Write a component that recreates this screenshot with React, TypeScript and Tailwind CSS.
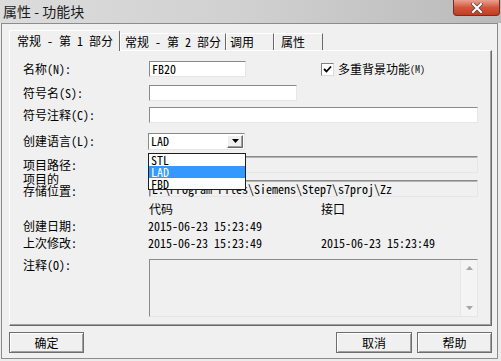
import React from "react";

const sunken =
  "border border-t-[#8a8a8a] border-l-[#8a8a8a] border-r-[#e6e6e6] border-b-[#e6e6e6]";
const raised =
  "border border-t-[#ffffff] border-l-[#ffffff] border-r-[#696969] border-b-[#696969] shadow-[inset_-1px_-1px_0_#a0a0a0]";

function Label({ children }: { children: React.ReactNode }) {
  return <span className="w-[126px] shrink-0 whitespace-pre">{children}</span>;
}

function DialogButton({ text, width }: { text: string; width: string }) {
  return (
    <div
      className={`${width} h-[21px] flex items-center justify-center bg-[#f0f0f0] border border-[#6e6e6e] shadow-[inset_1px_1px_0_#ffffff,inset_-1px_-1px_0_#a0a0a0]`}
    >
      {text}
    </div>
  );
}

export default function App() {
  return (
    <div className="w-[501px] h-[361px] bg-[#ececec] font-['Noto_Sans_Mono_CJK_SC','Noto_Sans_CJK_SC','Liberation_Mono',monospace] text-[12px] leading-[16px] text-black overflow-hidden">
      {/* Title bar */}
      <div className="h-[23px] flex items-start bg-gradient-to-r from-[#dcdcdc] via-[#d0d0d0] to-[#bababa]">
        <span className="ml-[3px] mt-[2px] font-['Noto_Sans_CJK_SC',sans-serif] text-[14px] leading-[19px] text-[#1a1a1a]">
          属性 - 功能块
        </span>
        <div className="ml-auto mr-[1px] w-[47px] h-[16px] rounded-b-[4px] border border-t-0 border-[#7a2c1f] bg-gradient-to-b from-[#e9a090] via-[#d2553b] to-[#c23d22] flex items-center justify-center">
          <svg width="12" height="10" viewBox="0 0 12 10">
            <path
              d="M2 1 L10 9 M10 1 L2 9"
              stroke="#4a4a4a"
              strokeWidth="3.4"
              strokeLinecap="square"
            />
            <path
              d="M2 1 L10 9 M10 1 L2 9"
              stroke="#ffffff"
              strokeWidth="2"
              strokeLinecap="square"
            />
          </svg>
        </div>
      </div>

      {/* Window body */}
      <div className="ml-[1px] w-[497px] h-[336px] border border-[#8c8c8c] bg-[#f0f0f0] pl-[7px] pr-[4px]">
        {/* Tabs */}
        <div className="h-[26px] flex items-end relative z-10">
          <div className="w-[111px] h-[21px] -mb-[1px] bg-[#f0f0f0] border border-b-0 border-t-white border-l-white border-r-[#696969] rounded-t-[2px] pl-[7px] leading-[19px] whitespace-pre">
            常规 - 第 1 部分
          </div>
          <div className="w-[106px] h-[17px] bg-[#f0f0f0] border border-b-0 border-t-white border-l-white border-r-[#696969] pl-[4px] leading-[15px] whitespace-pre">
            常规 - 第 2 部分
          </div>
          <div className="w-[48px] h-[17px] bg-[#f0f0f0] border border-b-0 border-t-white border-l-white border-r-[#696969] pl-[3px] leading-[15px]">
            调用
          </div>
          <div className="w-[49px] h-[17px] bg-[#f0f0f0] border border-b-0 border-t-white border-l-white border-r-[#696969] pl-[6px] leading-[15px]">
            属性
          </div>
        </div>

        {/* Tab panel */}
        <div className="w-[483px] h-[276px] border border-t-white border-l-white border-r-[#696969] border-b-[#696969] shadow-[inset_-1px_-1px_0_#a0a0a0] pt-[10px] pl-[13px]">
          {/* 名称 */}
          <div className="flex items-center h-[16px]">
            <Label>名称(N):</Label>
            <div className={`w-[97px] h-[16px] bg-white ${sunken} pl-[2px] leading-[14px]`}>
              FB20
            </div>
            <div className="ml-[75px] flex items-center">
              <div className="w-[13px] h-[13px] bg-white border border-t-[#808080] border-l-[#808080] border-r-[#dcdcdc] border-b-[#dcdcdc] flex items-center justify-center">
                <svg width="9" height="9" viewBox="0 0 9 9">
                  <path d="M1 4 L3.5 6.5 L8 1.5" fill="none" stroke="#000" strokeWidth="1.8" />
                </svg>
              </div>
              <span className="ml-[4px]">多重背景功能</span>
              <span className="text-[10px]">(M)</span>
            </div>
          </div>

          {/* 符号名 */}
          <div className="flex items-center h-[16px] mt-[8px]">
            <Label>符号名(S):</Label>
            <div className={`w-[148px] h-[16px] bg-white ${sunken}`} />
          </div>

          {/* 符号注释 */}
          <div className="flex items-center h-[16px] mt-[6px]">
            <Label>符号注释(C):</Label>
            <div className={`w-[329px] h-[16px] bg-white ${sunken}`} />
          </div>

          {/* 创建语言 */}
          <div className="flex items-center h-[16px] mt-[10px] relative z-20">
            <Label>创建语言(L):</Label>
            <div className={`w-[97px] h-[17px] -ml-[1px] bg-white ${sunken} relative flex items-center`}>
              <span className="pl-[2px] leading-[14px]">LAD</span>
              <div className={`absolute right-[1px] top-[1px] w-[16px] h-[13px] bg-[#f0f0f0] ${raised} flex items-center justify-center`}>
                <svg width="7" height="4" viewBox="0 0 7 4">
                  <path d="M0 0 H7 L3.5 4 Z" fill="#000" />
                </svg>
              </div>
              {/* open list */}
              <div className="absolute left-[-1px] top-[19px] w-[98px] bg-white border border-[#1e1e1e] leading-[12px]">
                <div className="h-[12px] pl-[2px]">STL</div>
                <div className="h-[12px] pl-[2px] bg-[#3399ff] text-white">LAD</div>
                <div className="h-[11px] pl-[2px]">FBD</div>
              </div>
            </div>
          </div>

          {/* 项目路径 */}
          <div className="flex items-center h-[17px] mt-[7px]">
            <Label>项目路径:</Label>
            <div className={`w-[329px] h-[17px] bg-[#f0f0f0] ${sunken} shadow-[inset_1px_1px_0_#b4b4b4]`} />
          </div>

          {/* 存储位置 */}
          <div className="flex items-end h-[24px]">
            <span className="w-[126px] shrink-0 flex flex-col leading-[12px]">
              <span>项目的</span>
              <span>存储位置:</span>
            </span>
            <div className={`w-[329px] h-[17px] bg-[#f0f0f0] ${sunken} shadow-[inset_1px_1px_0_#b4b4b4] pl-[2px] leading-[15px] whitespace-pre`}>
              E:\Program Files\Siemens\Step7\s7proj\Zz
            </div>
          </div>

          {/* header */}
          <div className="flex items-center h-[16px] mt-[4px]">
            <span className="w-[126px] shrink-0" />
            <span className="w-[172px] shrink-0">代码</span>
            <span>接口</span>
          </div>

          <div className="flex items-center h-[16px] mt-[1px]">
            <span className="w-[125px] shrink-0">创建日期:</span>
            <span className="w-[173px] shrink-0">2015-06-23 15:23:49</span>
          </div>

          <div className="flex items-center h-[16px] mt-[1px]">
            <span className="w-[125px] shrink-0">上次修改:</span>
            <span className="w-[173px] shrink-0">2015-06-23 15:23:49</span>
            <span>2015-06-23 15:23:49</span>
          </div>

          {/* 注释 */}
          <div className="flex items-start mt-[8px]">
            <span className="w-[126px] shrink-0 -mt-[2px]">注释(O):</span>
            <div className={`w-[329px] h-[58px] bg-[#f0f0f0] ${sunken} flex justify-end`}>
              <div className="w-[17px] h-full bg-[#f4f4f4] border-l border-[#e6e6e6] flex flex-col items-center justify-between py-[6px]">
                <svg width="7" height="4" viewBox="0 0 7 4">
                  <path d="M0 4 H7 L3.5 0 Z" fill="#a6a6a6" />
                </svg>
                <svg width="7" height="4" viewBox="0 0 7 4">
                  <path d="M0 0 H7 L3.5 4 Z" fill="#a6a6a6" />
                </svg>
              </div>
            </div>
          </div>
        </div>

        {/* Buttons */}
        <div className="flex items-center mt-[6px] w-[483px]">
          <DialogButton text="确定" width="w-[75px]" />
          <div className="ml-auto flex gap-[5px]">
            <DialogButton text="取消" width="w-[76px]" />
            <DialogButton text="帮助" width="w-[75px]" />
          </div>
        </div>
      </div>
    </div>
  );
}
